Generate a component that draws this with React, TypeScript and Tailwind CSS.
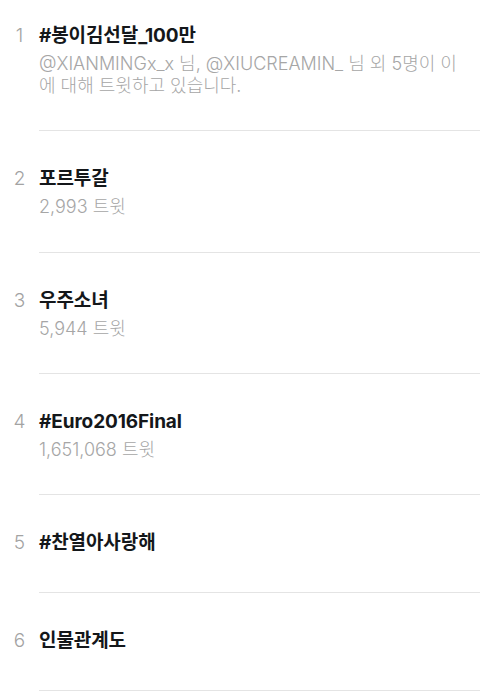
const trends = [
  {
    rank: 1,
    title: "#봉이김선달_100만",
    meta: "@XIANMINGx_x 님, @XIUCREAMIN_ 님 외 5명이 이에 대해 트윗하고 있습니다.",
  },
  { rank: 2, title: "포르투갈", meta: "2,993 트윗" },
  { rank: 3, title: "우주소녀", meta: "5,944 트윗" },
  { rank: 4, title: "#Euro2016Final", meta: "1,651,068 트윗" },
  { rank: 5, title: "#찬열아사랑해" },
  { rank: 6, title: "인물관계도" },
];

export default function App() {
  return (
    <div
      className="min-h-screen w-[480px] overflow-hidden bg-white"
      style={{ fontFamily: '"Inter", "Noto Sans CJK KR", sans-serif' }}
    >
      {trends.map((t, i) => (
        <div key={t.rank} className="flex">
          <div
            className={`w-[39px] shrink-0 text-center text-[19px] leading-6 font-light text-[#a3a3a3] ${
              i === 0 ? "pt-[24px]" : "pt-[36px]"
            }`}
          >
            {t.rank}
          </div>
          <div
            className={`min-w-0 flex-1 border-b border-[#e4e4e4] pr-4 ${
              i === 0 ? "pt-[24px]" : "pt-[36px]"
            } ${t.meta ? (i === 1 ? "pb-[34px]" : "pb-[33px]") : "pb-[37px]"}`}
          >
            <div className="text-[19px] leading-6 font-bold tracking-[-0.1px] text-[#14171a]">
              {t.title}
            </div>
            {t.meta && (
              <div className="mt-[5px] break-all text-[18px] leading-[22px] font-light text-[#a6a6a6]">
                {t.meta}
              </div>
            )}
          </div>
        </div>
      ))}
    </div>
  );
}
